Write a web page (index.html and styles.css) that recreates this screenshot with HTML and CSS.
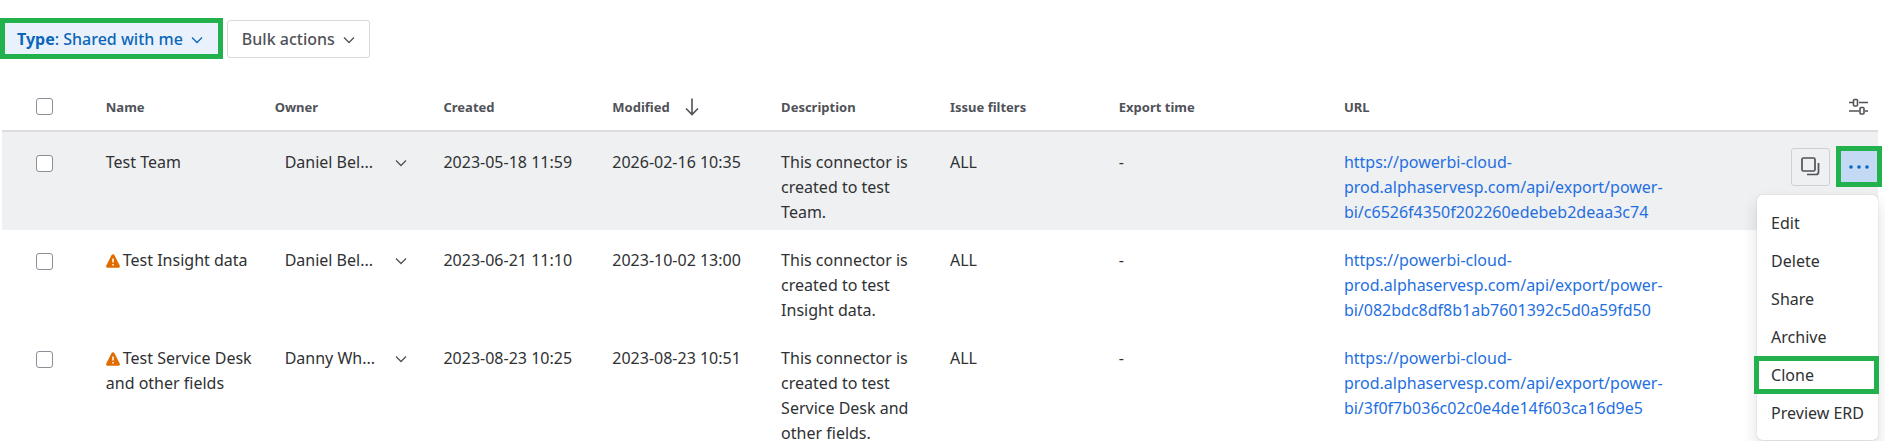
FILE: index.html
```html
<!DOCTYPE html>
<html lang="en">
<head>
    <meta charset="UTF-8">
    <meta name="viewport" content="width=device-width, initial-scale=1.0">
    <title>Connectors</title>
    <link rel="stylesheet" href="styles.css">
</head>
<body>
    <div class="toolbar">
        <button type="button" class="btn btn-filter marked">
            <span><b>Type</b>: Shared with me</span>
            <svg class="chevron" viewBox="0 0 12 8"><path d="M1 1.5l5 5 5-5"/></svg>
        </button>
        <button type="button" class="btn">
            <span>Bulk actions</span>
            <svg class="chevron" viewBox="0 0 12 8"><path d="M1 1.5l5 5 5-5"/></svg>
        </button>
    </div>

    <div class="table-wrap">
        <table class="connectors">
            <thead>
                <tr>
                    <th class="col-check"><input type="checkbox" class="check" aria-label="Select all"></th>
                    <th class="col">Name</th>
                    <th class="col">Owner</th>
                    <th class="col">Created</th>
                    <th class="col">
                        <div class="sorted">
                            Modified
                            <svg class="sort-icon" viewBox="0 0 14 18"><path d="M7 0.5v16M1 10.5l6 6 6-6"/></svg>
                        </div>
                    </th>
                    <th class="col">Description</th>
                    <th class="col">Issue filters</th>
                    <th class="col-export">Export time</th>
                    <th class="col-url">URL</th>
                    <th class="col-actions">
                        <button type="button" class="settings" aria-label="Columns">
                            <svg viewBox="0 0 19 18"><path d="M0 4.5h4M10 4.5h9M0 13h10M16 13h3"/><rect x="4.5" y="1.5" width="4" height="6.5" rx="1"/><rect x="11" y="9.5" width="4" height="6.5" rx="1"/></svg>
                        </button>
                    </th>
                </tr>
            </thead>
            <tbody>
                <tr class="active">
                    <td><input type="checkbox" class="check" aria-label="Select Test Team"></td>
                    <td>Test Team</td>
                    <td>
                        <div class="owner">
                            <select class="owner-select" aria-label="Owner"><option>Daniel Bel...</option></select>
                            <svg class="chevron" viewBox="0 0 12 8"><path d="M1 1.5l5 5 5-5"/></svg>
                        </div>
                    </td>
                    <td>2023-05-18 11:59</td>
                    <td>2026-02-16 10:35</td>
                    <td>This connector is created to test Team.</td>
                    <td>ALL</td>
                    <td>-</td>
                    <td><a href="#">https://powerbi-cloud-prod.alphaservesp.com/api/export/power-bi/c6526f4350f202260edebeb2deaa3c74</a></td>
                    <td class="actions">
                        <div class="action-buttons">
                            <button type="button" class="icon-btn" aria-label="Copy URL">
                                <svg viewBox="0 0 19 19"><rect x="1" y="1" width="13" height="13" rx="1.5"/><path d="M17.5 6v9a2.5 2.5 0 0 1-2.5 2.5H6"/></svg>
                            </button>
                            <button type="button" class="icon-btn more marked" aria-label="More">
                                <svg viewBox="0 0 20 4"><circle cx="2" cy="2" r="1.8"/><circle cx="10" cy="2" r="1.8"/><circle cx="18" cy="2" r="1.8"/></svg>
                            </button>
                        </div>
                        <div class="menu">
                            <button type="button" class="menu-item">Edit</button>
                            <button type="button" class="menu-item">Delete</button>
                            <button type="button" class="menu-item">Share</button>
                            <button type="button" class="menu-item">Archive</button>
                            <button type="button" class="menu-item marked">Clone</button>
                            <button type="button" class="menu-item">Preview ERD</button>
                        </div>
                    </td>
                </tr>
                <tr>
                    <td><input type="checkbox" class="check" aria-label="Select Test Insight data"></td>
                    <td><svg class="warning" viewBox="0 0 14 14"><path d="M7 .2c.6 0 1.1.3 1.4.8l5.300 10.400c.5 1.100-.2 2.400-1.400 2.400H1.700C.5 13.800-.2 12.500.3 11.400L5.600 1C5.900.5 6.400.2 7 .2z"/><path class="mark" d="M7 4.500v4M7 10v1.500"/></svg>Test Insight data</td>
                    <td>
                        <div class="owner">
                            <select class="owner-select" aria-label="Owner"><option>Daniel Bel...</option></select>
                            <svg class="chevron" viewBox="0 0 12 8"><path d="M1 1.5l5 5 5-5"/></svg>
                        </div>
                    </td>
                    <td>2023-06-21 11:10</td>
                    <td>2023-10-02 13:00</td>
                    <td>This connector is created to test Insight data.</td>
                    <td>ALL</td>
                    <td>-</td>
                    <td><a href="#">https://powerbi-cloud-prod.alphaservesp.com/api/export/power-bi/082bdc8df8b1ab7601392c5d0a59fd50</a></td>
                    <td></td>
                </tr>
                <tr>
                    <td><input type="checkbox" class="check" aria-label="Select Test Service Desk and other fields"></td>
                    <td><svg class="warning" viewBox="0 0 14 14"><path d="M7 .2c.6 0 1.1.3 1.4.8l5.300 10.400c.5 1.100-.2 2.400-1.400 2.400H1.700C.5 13.800-.2 12.500.3 11.400L5.600 1C5.900.5 6.400.2 7 .2z"/><path class="mark" d="M7 4.500v4M7 10v1.500"/></svg>Test Service Desk and other fields</td>
                    <td>
                        <div class="owner">
                            <select class="owner-select" aria-label="Owner"><option>Danny Wh...</option></select>
                            <svg class="chevron" viewBox="0 0 12 8"><path d="M1 1.5l5 5 5-5"/></svg>
                        </div>
                    </td>
                    <td>2023-08-23 10:25</td>
                    <td>2023-08-23 10:51</td>
                    <td>This connector is created to test Service Desk and other fields.</td>
                    <td>ALL</td>
                    <td>-</td>
                    <td><a href="#">https://powerbi-cloud-prod.alphaservesp.com/api/export/power-bi/3f0f7b036c02c0e4de14f603ca16d9e5</a></td>
                    <td></td>
                </tr>
            </tbody>
        </table>
    </div>
</body>
</html>
```

FILE: styles.css
```css
* {
    box-sizing: border-box;
}
body {
    margin: 0;
    padding-top: 18px;
    overflow: hidden;
    background: #fff;
    color: #2f3133;
    font-family: 'Segoe UI', 'Noto Sans', sans-serif;
    font-size: 16px;
    line-height: 25px;
}
button,
select {
    font: inherit;
    color: inherit;
    cursor: pointer;
}
svg {
    flex: none;
    fill: none;
    stroke: currentColor;
}
.toolbar {
    display: flex;
    align-items: center;
    gap: 4px;
    height: 41px;
}
.btn {
    display: flex;
    align-items: center;
    gap: 8px;
    height: 38px;
    padding: 2px 14px 0;
    background: #fff;
    border: 1px solid #d9d9db;
    border-radius: 3px;
    color: #505258;
    font-weight: 500;
    white-space: nowrap;
}
.btn-filter {
    padding: 2px 15px 0 12px;
    background: #e9f2fc;
    color: #0c66b8;
}
.marked {
    border: 5px solid #22b14c;
    border-radius: 0;
}
.btn.marked {
    height: 41px;
}
.chevron {
    width: 12px;
    height: 8px;
    stroke-width: 1.3;
}
.table-wrap {
    margin: 14px 7px 0 2px;
}
.connectors {
    width: 100%;
    table-layout: fixed;
    border-collapse: separate;
    border-spacing: 0;
}
th {
    height: 59px;
    padding: 20px 10px 10px;
    border-bottom: 2px solid #dddddf;
    color: #505258;
    font-size: 13px;
    line-height: 18px;
    font-weight: bold;
    text-align: left;
}
.col-check {
    width: 5%;
}
.col {
    width: 9%;
}
.col-export {
    width: 12%;
}
.col-url {
    width: 19%;
}
.col-actions {
    width: 10%;
}
td {
    padding: 18px 10px 5px;
    vertical-align: top;
}
.active {
    background: #eff0f2;
}
a {
    color: #1f6fe0;
    text-decoration: none;
}
.check {
    display: block;
    appearance: none;
    width: 17px;
    height: 17px;
    margin: 0 0 0 24px;
    background: #fff;
    border: 1px solid #8c8f97;
    border-radius: 3px;
}
td .check {
    margin-top: 5px;
}
.sorted {
    display: flex;
    align-items: center;
    gap: 15px;
}
.sort-icon {
    width: 14px;
    height: 18px;
    stroke-width: 1.6;
}
.settings {
    display: block;
    margin-left: auto;
    padding: 0;
    background: none;
    border: 0;
    color: #505258;
}
.settings svg {
    display: block;
    width: 19px;
    height: 18px;
    stroke-width: 1.6;
}
.owner {
    display: flex;
    align-items: center;
    justify-content: space-between;
    padding: 0 16px 0 10px;
    color: #2f3133;
}
.owner-select {
    appearance: none;
    width: 92px;
    height: 25px;
    padding: 0;
    background: none;
    border: 0;
}
.owner .chevron {
    color: #505258;
}
.warning {
    width: 14px;
    height: 14px;
    margin-right: 3px;
    vertical-align: -2px;
    fill: #e06c00;
    stroke: none;
}
.warning .mark {
    stroke: #fff;
    stroke-width: 1.5;
}
.actions {
    position: relative;
    padding: 14px 0 0;
}
.action-buttons {
    display: flex;
    align-items: center;
    justify-content: flex-end;
    gap: 6px;
    margin-right: -4px;
}
.icon-btn {
    display: flex;
    align-items: center;
    justify-content: center;
    width: 39px;
    height: 38px;
    padding: 0;
    background: #eff0f2;
    border: 1px solid #cfd0d3;
    border-radius: 3px;
    color: #505258;
}
.icon-btn svg {
    width: 19px;
    height: 19px;
    stroke-width: 1.7;
}
.more {
    width: 46px;
    height: 41px;
    background: #c3d9f4;
    border: 5px solid #22b14c;
    border-radius: 0;
    color: #0c66c4;
}
.more svg {
    width: 20px;
    height: 4px;
    fill: currentColor;
    stroke: none;
}
.menu {
    position: absolute;
    z-index: 1;
    top: 63px;
    right: 0;
    display: flex;
    flex-direction: column;
    padding: 9px 0 8px;
    background: #fff;
    border-radius: 5px;
    box-shadow: 0 0 1px rgba(30,31,33,0.35), 0 8px 16px rgba(30,31,33,0.15);
}
.menu-item {
    display: flex;
    align-items: center;
    height: 38px;
    padding: 0 14px;
    background: none;
    border: 0;
    white-space: nowrap;
}
.menu-item.marked {
    margin: 0 -1px 0 -3px;
    padding: 0 12px;
    border: 5px solid #22b14c;
}
```
